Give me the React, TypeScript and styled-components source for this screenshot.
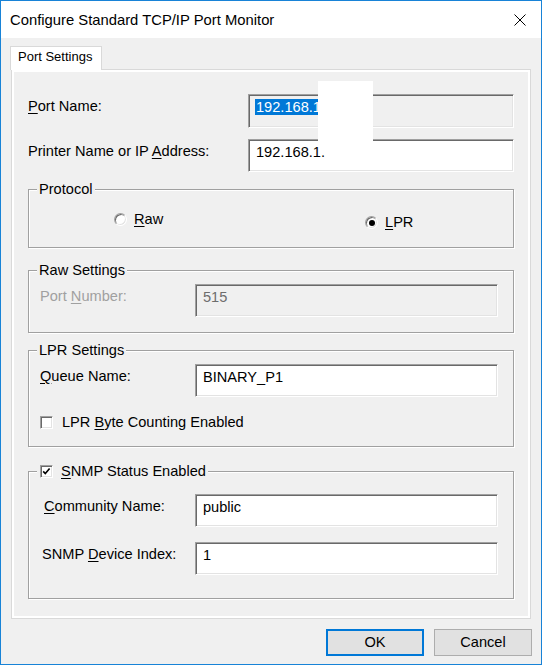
import React from "react";
import styled, { createGlobalStyle } from "styled-components";

const FONT = `"Liberation Sans", Arial, sans-serif`;

const GlobalStyle = createGlobalStyle`
  html, body { margin: 0; padding: 0; background: #ffffff; }
  body { font-family: ${FONT}; }
  #root { width: 544px; height: 667px; }
`;

const Window = styled.div`
  position: relative;
  width: 542px;
  height: 665px;
  box-sizing: border-box;
  border: 1px solid #1883d7;
  display: flex;
  flex-direction: column;
  font-family: ${FONT};
  font-size: 14.6px;
  color: #000;
  background: #f0f0f0;
`;

const TitleBar = styled.div`
  height: 37px;
  flex: none;
  background: #ffffff;
  display: flex;
  align-items: center;
  justify-content: space-between;
  padding: 1px 15px 0 9px;
  box-sizing: border-box;
`;

const Title = styled.div`
  font-size: 14.8px;
  line-height: 18px;
  color: #000;
`;

const CloseGlyph = styled.svg`
  width: 12px;
  height: 12px;
  display: block;
`;

const Body = styled.div`
  flex: 1;
  display: flex;
  flex-direction: column;
  padding: 8px 10px 0 10px;
`;

const TabStrip = styled.div`
  display: flex;
  position: relative;
  z-index: 1;
  margin-bottom: -1px;
`;

const Tab = styled.div`
  width: 92px;
  height: 24px;
  margin-left: -1px;
  box-sizing: border-box;
  border: 1px solid #d9d9d9;
  border-bottom: none;
  background: #ffffff;
  font-size: 13px;
  line-height: 16px;
  padding: 2px 0 0 7px;
`;

const TabPage = styled.div`
  height: 550px;
  box-sizing: border-box;
  border: 1px solid #d9d9d9;
  box-shadow: inset 0 0 0 2px #ffffff;
  padding: 0 16px;
  display: flex;
  flex-direction: column;
`;

const FieldRow = styled.div<{ $mt: number; $labelWidth: number }>`
  display: grid;
  grid-template-columns: ${(p) => p.$labelWidth}px 1fr;
  align-items: start;
  margin-top: ${(p) => p.$mt}px;
`;

const Label = styled.div<{ $disabled?: boolean; $indent?: number }>`
  padding-top: 4px;
  padding-left: ${(p) => p.$indent ?? 0}px;
  line-height: 17px;
  white-space: nowrap;
  color: ${(p) => (p.$disabled ? "#a0a0a0" : "#000")};
`;

const Key = styled.u`
  text-decoration: underline;
  text-underline-offset: 2px;
`;

const TextBox = styled.div<{ $h?: number; $disabled?: boolean; $readOnly?: boolean }>`
  height: ${(p) => p.$h ?? 33}px;
  box-sizing: border-box;
  border: 1px solid;
  border-color: #a0a0a0 #ffffff #ffffff #a0a0a0;
  box-shadow: inset 1px 1px 0 #696969, inset -1px -1px 0 #e3e3e3;
  background: ${(p) => (p.$disabled || p.$readOnly ? "#f0f0f0" : "#ffffff")};
  color: ${(p) => (p.$disabled ? "#6d6d6d" : "#000")};
  padding: 4px 0 0 7px;
  line-height: 17px;
  white-space: nowrap;
  overflow: hidden;
`;

const Selected = styled.span`
  background: #0078d7;
  color: #ffffff;
  padding: 0 1px;
  margin-left: -1px;
`;

const GroupBox = styled.div<{ $mt: number; $h: number }>`
  margin-top: ${(p) => p.$mt}px;
  height: ${(p) => p.$h}px;
  box-sizing: border-box;
  border: 1px solid #a0a0a0;
  box-shadow: inset 1px 1px 0 #ffffff, 1px 1px 0 #ffffff;
  display: flex;
  flex-direction: column;
  padding: 0 15px 0 11px;
`;

const Legend = styled.div<{ $pl?: number }>`
  align-self: flex-start;
  margin: -9px 0 0 -3px;
  padding: 0 2px 0 ${(p) => p.$pl ?? 2}px;
  height: 17px;
  line-height: 17px;
  background: #f0f0f0;
  display: flex;
  align-items: center;
  gap: 8px;
  white-space: nowrap;
`;

const RadioRow = styled.div`
  display: grid;
  grid-template-columns: 251px auto;
  margin: 13px 0 0 74px;
`;

const RadioOption = styled.div<{ $dy?: number }>`
  display: flex;
  align-items: center;
  gap: 7px;
  height: 17px;
  line-height: 17px;
  margin-top: ${(p) => p.$dy ?? 0}px;
`;

const Radio = styled.span<{ $checked?: boolean }>`
  width: 13px;
  height: 13px;
  flex: none;
  box-sizing: border-box;
  border-radius: 50%;
  border: 1px solid;
  border-color: #a0a0a0 #ffffff #ffffff #a0a0a0;
  box-shadow: inset 1px 1px 0 #696969, inset -1px -1px 0 #e3e3e3;
  background: #ffffff;
  display: flex;
  align-items: center;
  justify-content: center;
  &::after {
    content: "";
    width: 6px;
    height: 6px;
    border-radius: 50%;
    background: ${(p) => (p.$checked ? "#000" : "transparent")};
  }
`;

const CheckRow = styled.div<{ $mt: number }>`
  display: flex;
  align-items: center;
  gap: 9px;
  height: 17px;
  line-height: 17px;
  margin-top: ${(p) => p.$mt}px;
`;

const CheckBox = styled.span`
  width: 13px;
  height: 13px;
  flex: none;
  box-sizing: border-box;
  border: 1px solid;
  border-color: #a0a0a0 #ffffff #ffffff #a0a0a0;
  box-shadow: inset 1px 1px 0 #696969, inset -1px -1px 0 #e3e3e3;
  background: #ffffff;
  display: flex;
  align-items: center;
  justify-content: center;
`;

const ButtonRow = styled.div`
  display: flex;
  justify-content: flex-end;
  gap: 10px;
  margin: 10px -1px 0 0;
`;

const Button = styled.div<{ $default?: boolean }>`
  width: 98px;
  height: 27px;
  box-sizing: border-box;
  background: #e1e1e1;
  border: ${(p) => (p.$default ? "2px solid #0078d7" : "1px solid #adadad")};
  display: flex;
  align-items: center;
  justify-content: center;
  line-height: 17px;
`;

const Redaction = styled.div`
  position: absolute;
  left: 317px;
  top: 80px;
  width: 55px;
  height: 61px;
  background: #ffffff;
`;

const CheckMark = () => (
  <svg width="11" height="11" viewBox="0 0 11 11">
    <path d="M2.2 5.4 L4.3 7.6 L8.6 2.6" fill="none" stroke="#000" strokeWidth="1.6" />
  </svg>
);

export default function App() {
  return (
    <>
      <GlobalStyle />
      <Window>
        <TitleBar>
          <Title>Configure Standard TCP/IP Port Monitor</Title>
          <CloseGlyph viewBox="0 0 12 12">
            <path d="M0.5 0.5 L11.5 11.5 M11.5 0.5 L0.5 11.5" stroke="#000" strokeWidth="1" />
          </CloseGlyph>
        </TitleBar>
        <Body>
          <TabStrip>
            <Tab>Port Settings</Tab>
          </TabStrip>
          <TabPage>
            <FieldRow $mt={24} $labelWidth={220}>
              <Label>
                <Key>P</Key>ort Name:
              </Label>
              <TextBox $h={34} $readOnly>
                <Selected>192.168.1.</Selected>
              </TextBox>
            </FieldRow>
            <FieldRow $mt={11} $labelWidth={220}>
              <Label>
                Printer Name or IP <Key>A</Key>ddress:
              </Label>
              <TextBox>192.168.1.</TextBox>
            </FieldRow>

            <GroupBox $mt={17} $h={59}>
              <Legend>Protocol</Legend>
              <RadioRow>
                <RadioOption>
                  <Radio />
                  <span>
                    <Key>R</Key>aw
                  </span>
                </RadioOption>
                <RadioOption $dy={3}>
                  <Radio $checked />
                  <span>
                    <Key>L</Key>PR
                  </span>
                </RadioOption>
              </RadioRow>
            </GroupBox>

            <GroupBox $mt={22} $h={63}>
              <Legend>Raw Settings</Legend>
              <FieldRow $mt={5} $labelWidth={155}>
                <Label $disabled>
                  Port <Key>N</Key>umber:
                </Label>
                <TextBox $disabled>515</TextBox>
              </FieldRow>
            </GroupBox>

            <GroupBox $mt={17} $h={97}>
              <Legend>LPR Settings</Legend>
              <FieldRow $mt={5} $labelWidth={155}>
                <Label>
                  <Key>Q</Key>ueue Name:
                </Label>
                <TextBox>BINARY_P1</TextBox>
              </FieldRow>
              <CheckRow $mt={17}>
                <CheckBox />
                <span>
                  LPR <Key>B</Key>yte Counting Enabled
                </span>
              </CheckRow>
            </GroupBox>

            <GroupBox $mt={24} $h={128}>
              <Legend $pl={3}>
                <CheckBox>
                  <CheckMark />
                </CheckBox>
                <span>
                  <Key>S</Key>NMP Status Enabled
                </span>
              </Legend>
              <FieldRow $mt={14} $labelWidth={155}>
                <Label $indent={4}>
                  <Key>C</Key>ommunity Name:
                </Label>
                <TextBox>public</TextBox>
              </FieldRow>
              <FieldRow $mt={15} $labelWidth={155}>
                <Label $indent={2}>
                  SNMP <Key>D</Key>evice Index:
                </Label>
                <TextBox>1</TextBox>
              </FieldRow>
            </GroupBox>
          </TabPage>
          <ButtonRow>
            <Button $default>OK</Button>
            <Button>Cancel</Button>
          </ButtonRow>
        </Body>
        <Redaction />
      </Window>
    </>
  );
}
